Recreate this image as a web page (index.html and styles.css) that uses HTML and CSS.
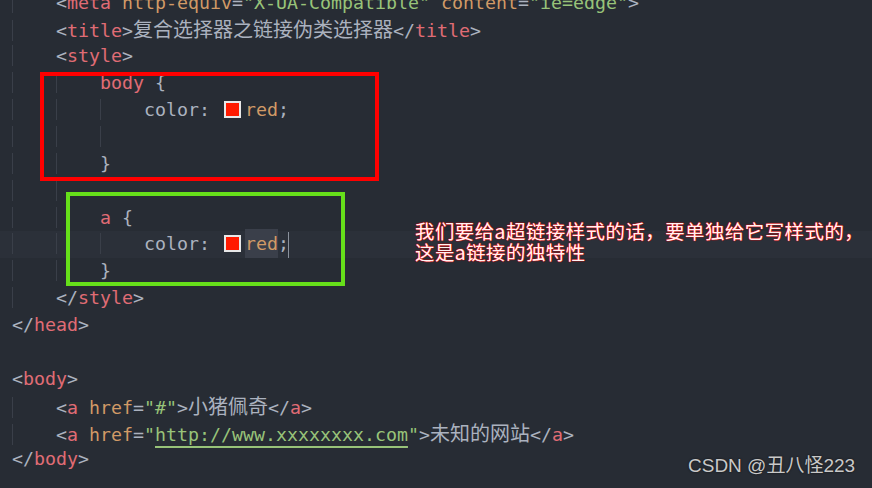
FILE: index.html
```html
<!DOCTYPE html>
<html lang="zh">
<head>
<meta charset="utf-8">
<title>复合选择器之链接伪类选择器</title>
<link rel="stylesheet" href="styles.css">
</head>
<body>
<div class="editor">
<div class="code">
<div class="ln"><span class="ind">    </span><span class="p">&lt;</span><span class="t">meta</span> <span class="at">http-equiv</span><span class="p">=</span><span class="s">"X-UA-Compatible"</span> <span class="at">content</span><span class="p">=</span><span class="s">"ie=edge"</span><span class="p">&gt;</span></div>
<div class="ln"><span class="ind">    </span><span class="p">&lt;</span><span class="t">title</span><span class="p">&gt;</span><span class="cj">复合选择器之链接伪类选择器</span><span class="p">&lt;/</span><span class="t">title</span><span class="p">&gt;</span></div>
<div class="ln"><span class="ind">    </span><span class="p">&lt;</span><span class="t">style</span><span class="p">&gt;</span></div>
<div class="ln"><span class="ind">    </span><span class="ind">    </span><span class="t">body</span> <span class="p">{</span></div>
<div class="ln"><span class="ind">    </span><span class="ind">    </span><span class="ind">    </span><span class="p">color: </span><span class="sw"></span><span class="v">red</span><span class="p">;</span></div>
<div class="ln"><span class="ind">    </span><span class="ind">    </span><span class="ind">    </span></div>
<div class="ln"><span class="ind">    </span><span class="ind">    </span><span class="p">}</span></div>
<div class="ln"><span class="ind">    </span><span class="ind">    </span></div>
<div class="ln"><span class="ind">    </span><span class="ind">    </span><span class="t">a</span> <span class="p">{</span></div>
<div class="ln cur"><span class="ind">    </span><span class="ind">    </span><span class="ind">    </span><span class="p">color: </span><span class="sw"></span><span class="v sel">red</span><span class="p">;</span><span class="caret"></span></div>
<div class="ln"><span class="ind">    </span><span class="ind">    </span><span class="p">}</span></div>
<div class="ln"><span class="ind">    </span><span class="p">&lt;/</span><span class="t">style</span><span class="p">&gt;</span></div>
<div class="ln"><span class="p">&lt;/</span><span class="t">head</span><span class="p">&gt;</span></div>
<div class="ln"></div>
<div class="ln"><span class="p">&lt;</span><span class="t">body</span><span class="p">&gt;</span></div>
<div class="ln"><span class="ind">    </span><span class="p">&lt;</span><span class="t">a</span> <span class="at">href</span><span class="p">=</span><span class="s">"#"</span><span class="p">&gt;</span><span class="cj">小猪佩奇</span><span class="p">&lt;/</span><span class="t">a</span><span class="p">&gt;</span></div>
<div class="ln"><span class="ind">    </span><span class="p">&lt;</span><span class="t">a</span> <span class="at">href</span><span class="p">=</span><span class="s">"</span><span class="s url">http://www.xxxxxxxx.com</span><span class="s">"</span><span class="p">&gt;</span><span class="cj">未知的网站</span><span class="p">&lt;/</span><span class="t">a</span><span class="p">&gt;</span></div>
<div class="ln"><span class="p">&lt;/</span><span class="t">body</span><span class="p">&gt;</span></div>
</div>
<div class="box box-red"></div>
<div class="box box-green"></div>
<div class="note"><div class="note-line">我们要给a超链接样式的话，要单独给它写样式的，</div><div class="note-line">这是a链接的独特性</div></div>
<div class="mark">CSDN @丑八怪223</div>
</div>
</body>
</html>
```
FILE: styles.css
```css
html, body {
  margin: 0;
  padding: 0;
  background: #272c34;
}
.editor {
  position: relative;
  width: 872px;
  height: 488px;
  overflow: hidden;
}
.code {
  margin-top: -10.4px;
  font-family: "DejaVu Sans Mono", "Liberation Mono", monospace;
  font-size: 18.27px;
  color: #abb2bf;
}
.ln {
  height: 26.875px;
  line-height: 26.875px;
  white-space: pre;
  padding-left: 12px;
}
.ln.cur {
  background: #2b3039;
}
.ind {
  box-shadow: inset 1px 0 0 #3a3f49;
}
.p { color: #abb2bf; }
.t { color: #e06c75; }
.at { color: #d19a66; }
.s { color: #98c379; }
.v { color: #d19a66; }
.url {
  text-decoration: underline;
  text-decoration-color: #98c379;
  text-decoration-thickness: 2px;
  text-underline-offset: 5px;
}
.cj {
  font-family: "Noto Sans CJK SC", sans-serif;
  font-size: 20px;
  color: #abb2bf;
}
.sw {
  display: inline-block;
  box-sizing: border-box;
  width: 17px;
  height: 17px;
  margin: 0 4px 0 3px;
  border: 2px solid #e8e8e8;
  background: #ff1a00;
  vertical-align: -2px;
}
.sel {
  background: #3a3f4a;
  padding: 4px 0;
}
.caret {
  display: inline-block;
  width: 1px;
  height: 26px;
  background: #8a919c;
  vertical-align: middle;
  margin-left: -1px;
}
.box {
  position: absolute;
  box-sizing: border-box;
  border: 4px solid;
}
.box-red {
  left: 40px;
  top: 72px;
  width: 339px;
  height: 109px;
  border-color: #ff0000;
}
.box-green {
  left: 66px;
  top: 192px;
  width: 279px;
  height: 94px;
  border-color: #66e01a;
}
.note {
  position: absolute;
  left: 415px;
  top: 220px;
  display: flex;
  flex-direction: column;
  font-family: "Noto Sans CJK SC", sans-serif;
  font-size: 19.5px;
  letter-spacing: 0.4px;
  color: #fff2f2;
  text-shadow: 0 0 1px #ff0000, 0 0 1px #ff0000, 0 0 1px #ff0000;
  white-space: nowrap;
}
.note-line {
  height: 21px;
  line-height: 21px;
}
.mark {
  position: absolute;
  left: 688px;
  top: 455px;
  font-family: "Liberation Sans", "Noto Sans CJK SC", sans-serif;
  font-size: 19px;
  line-height: 22px;
  color: #c9c9c9;
  text-shadow: 0 0 2px #111;
  white-space: nowrap;
}
```
